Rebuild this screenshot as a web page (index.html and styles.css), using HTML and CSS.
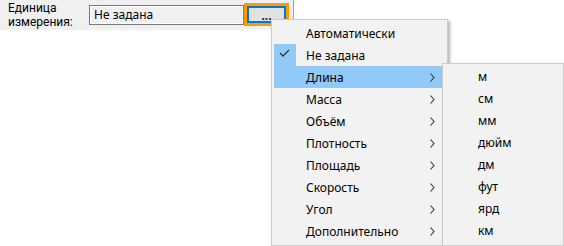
FILE: index.html
```html
<!DOCTYPE html>
<html lang="ru">
<head>
    <meta charset="UTF-8">
    <title>Единица измерения</title>
    <link rel="stylesheet" href="styles.css">
</head>
<body>
    <div class="panel">
        <label class="field-label">Единица<br>измерения:</label>
        <div class="field-value">Не задана</div>
        <div class="pick-frame">
            <button class="pick-btn">...</button>
        </div>
    </div>

    <!-- Main unit menu -->
    <div class="menu main-menu">
        <div class="menu-item">
            <span class="check"></span>
            <span class="item-text">Автоматически</span>
            <span class="arrow"></span>
        </div>
        <div class="menu-item">
            <span class="check checked">
                <svg width="22" height="22" viewBox="0 0 22 22"><polyline points="6,9 9,12 15,6" fill="none" stroke="#333" stroke-width="1.3"/></svg>
            </span>
            <span class="item-text">Не задана</span>
            <span class="arrow"></span>
        </div>
        <div class="menu-item active">
            <span class="check"></span>
            <span class="item-text">Длина</span>
            <span class="arrow"><svg width="5" height="9" viewBox="0 0 5 9"><polyline points="0.5,0.5 4,4.5 0.5,8.5" fill="none" stroke="#333" stroke-width="1.1"/></svg></span>
        </div>
        <div class="menu-item">
            <span class="check"></span>
            <span class="item-text">Масса</span>
            <span class="arrow"><svg width="5" height="9" viewBox="0 0 5 9"><polyline points="0.5,0.5 4,4.5 0.5,8.5" fill="none" stroke="#333" stroke-width="1.1"/></svg></span>
        </div>
        <div class="menu-item">
            <span class="check"></span>
            <span class="item-text">Объём</span>
            <span class="arrow"><svg width="5" height="9" viewBox="0 0 5 9"><polyline points="0.5,0.5 4,4.5 0.5,8.5" fill="none" stroke="#333" stroke-width="1.1"/></svg></span>
        </div>
        <div class="menu-item">
            <span class="check"></span>
            <span class="item-text">Плотность</span>
            <span class="arrow"><svg width="5" height="9" viewBox="0 0 5 9"><polyline points="0.5,0.5 4,4.5 0.5,8.5" fill="none" stroke="#333" stroke-width="1.1"/></svg></span>
        </div>
        <div class="menu-item">
            <span class="check"></span>
            <span class="item-text">Площадь</span>
            <span class="arrow"><svg width="5" height="9" viewBox="0 0 5 9"><polyline points="0.5,0.5 4,4.5 0.5,8.5" fill="none" stroke="#333" stroke-width="1.1"/></svg></span>
        </div>
        <div class="menu-item">
            <span class="check"></span>
            <span class="item-text">Скорость</span>
            <span class="arrow"><svg width="5" height="9" viewBox="0 0 5 9"><polyline points="0.5,0.5 4,4.5 0.5,8.5" fill="none" stroke="#333" stroke-width="1.1"/></svg></span>
        </div>
        <div class="menu-item">
            <span class="check"></span>
            <span class="item-text">Угол</span>
            <span class="arrow"><svg width="5" height="9" viewBox="0 0 5 9"><polyline points="0.5,0.5 4,4.5 0.5,8.5" fill="none" stroke="#333" stroke-width="1.1"/></svg></span>
        </div>
        <div class="menu-item">
            <span class="check"></span>
            <span class="item-text">Дополнительно</span>
            <span class="arrow"><svg width="5" height="9" viewBox="0 0 5 9"><polyline points="0.5,0.5 4,4.5 0.5,8.5" fill="none" stroke="#333" stroke-width="1.1"/></svg></span>
        </div>
    </div>

    <!-- Length submenu -->
    <div class="menu sub-menu">
        <div class="sub-item">м</div>
        <div class="sub-item">см</div>
        <div class="sub-item">мм</div>
        <div class="sub-item">дюйм</div>
        <div class="sub-item">дм</div>
        <div class="sub-item">фут</div>
        <div class="sub-item">ярд</div>
        <div class="sub-item">км</div>
    </div>
</body>
</html>
```

FILE: styles.css
```css
:root {
    --panel: #f0f0f0;
    --menu-bg: #f2f2f2;
    --menu-border: #cccccc;
    --highlight: #91c9f7;
    --focus: #ff9900;
    --accent: #0078d7;
}

* {
    box-sizing: border-box;
    margin: 0;
    padding: 0;
}

body {
    width: 564px;
    height: 246px;
    overflow: hidden;
    background: #fff;
    color: #000;
    font-family: "Noto Sans", "Liberation Sans", sans-serif;
    font-size: 12px;
    position: relative;
}

.panel {
    width: 294px;
    height: 30px;
    background: var(--panel);
    border-right: 1px solid #a0a0a0;
    display: flex;
    align-items: flex-start;
}

.field-label {
    width: 89px;
    padding-left: 8px;
    font-family: Roboto, "Noto Sans", sans-serif;
    line-height: 14px;
    padding-top: 1px;
}

.field-value {
    width: 155px;
    height: 20px;
    margin-top: 5px;
    border: 1px solid #7a7a7a;
    box-shadow: inset 0 0 0 1px #fff;
    padding-left: 4px;
    line-height: 17px;
}

.pick-frame {
    width: 45px;
    height: 23px;
    margin-top: 3px;
    border: 3px solid var(--focus);
}

.pick-btn {
    width: 100%;
    height: 100%;
    border: 2px solid var(--accent);
    background: #e1e1e1;
    font-family: inherit;
    font-size: 12px;
    font-weight: bold;
    color: #1a1a40;
    line-height: 10px;
    padding-top: 3px;
}

.menu {
    position: absolute;
    background: var(--menu-bg);
    border: 1px solid var(--menu-border);
    box-shadow: 2px 2px 3px rgba(0, 0, 0, 0.3);
    padding: 2px;
}

.main-menu {
    left: 271px;
    top: 19px;
    width: 177px;
    height: 227px;
}

.menu-item {
    height: 22px;
    display: flex;
    align-items: center;
}

.menu-item.active {
    background: var(--highlight);
}

.check {
    width: 22px;
    height: 22px;
    display: block;
}

.check.checked {
    background: var(--highlight);
}

.check svg {
    display: block;
}

.item-text {
    flex: 1;
    padding-left: 10px;
}

.arrow {
    width: 15px;
    display: flex;
    align-items: center;
}

.arrow svg {
    display: block;
}

.sub-menu {
    left: 442px;
    top: 63px;
    width: 122px;
    height: 183px;
}

.sub-item {
    height: 22px;
    line-height: 22px;
    padding-left: 33px;
}
```
